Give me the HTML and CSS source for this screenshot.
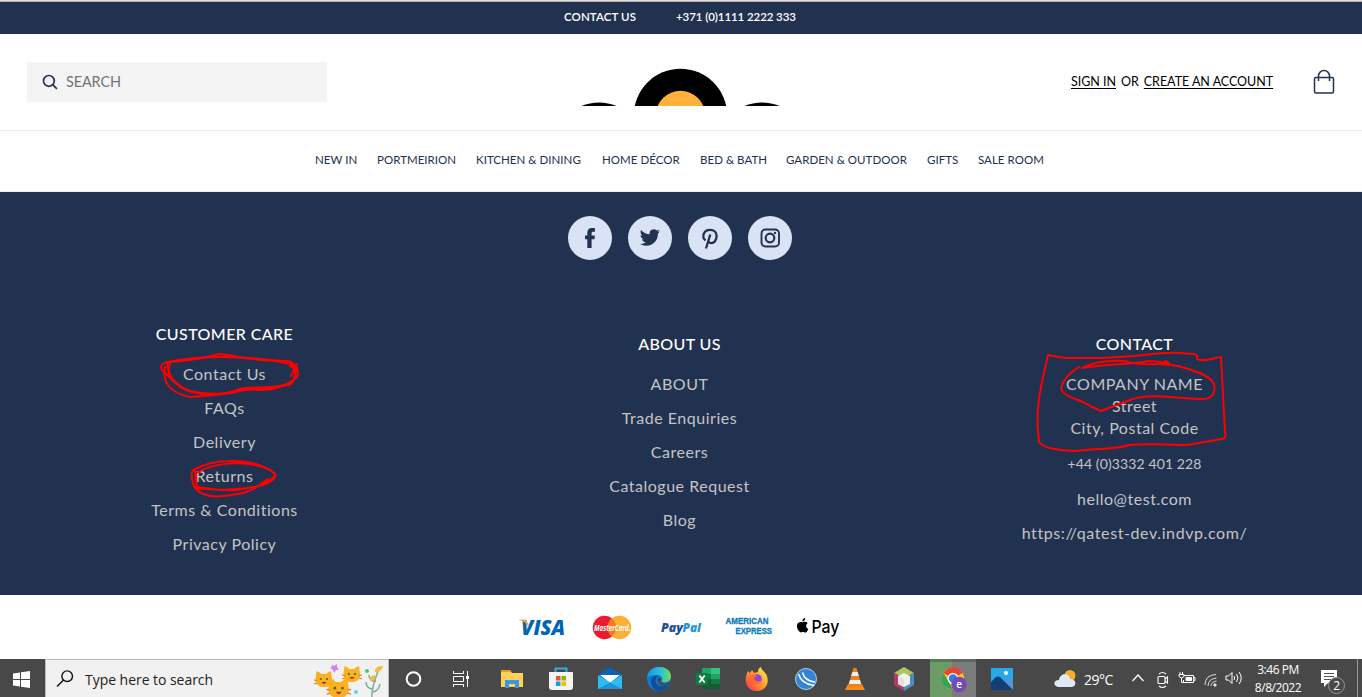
FILE: index.html
```html
<!DOCTYPE html>
<html lang="en">
<head>
<meta charset="utf-8">
<title>Shop</title>
<link rel="stylesheet" href="styles.css">
</head>
<body>
<div class="edge"></div>
<div class="topbar"><span class="top-contact">CONTACT US</span><span class="top-phone">+371 (0)1111 2222 333</span></div>
<header class="header">
  <div class="search">
    <svg width="16" height="16" viewBox="0 0 16 16" fill="none" stroke="#223250" stroke-width="1.7"><circle cx="6.9" cy="6.9" r="5.4"/><path d="M10.700 10.700l4.200 4.200"/></svg>
    <span>SEARCH</span>
  </div>
  <svg class="logo" width="200" height="38" viewBox="0 0 200 38"><circle cx="99.500" cy="47.500" r="46.700"/><circle cx="99.500" cy="47.500" r="24.700" fill="#ffb13b"/><circle cx="18" cy="81" r="46.500"/><circle cx="181" cy="81" r="46.500"/></svg>
  <div class="account"><a class="signin">SIGN IN</a><span>OR</span><a class="create">CREATE AN ACCOUNT</a></div>
  <svg class="bag" width="22" height="26" viewBox="0 0 22 26" fill="none" stroke="#223250" stroke-width="1.500"><rect x="1.500" y="8.500" width="19" height="15.500" rx="1.500"/><path d="M5.500 12V7a5.500 5.500 0 0 1 11 0v5"/></svg>
</header>
<nav class="nav"><a class="n1">NEW IN</a><a class="n2">PORTMEIRION</a><a class="n3">KITCHEN &amp; DINING</a><a class="n4">HOME DÉCOR</a><a class="n5">BED &amp; BATH</a><a class="n6">GARDEN &amp; OUTDOOR</a><a class="n7">GIFTS</a><a class="n8">SALE ROOM</a></nav>
<footer class="footer">
  <div class="social">
    <a><svg width="44" height="44" viewBox="0 0 44 44"><path d="M19.300 32V23.300H17v-3.800h2.300v-2.500c0-3.400 1.700-4.900 4.500-4.900h3.100v3.600h-1.700c-1.300 0-1.600.6-1.600 1.800v2h3.300l-.4 3.800h-2.900V32z"/></svg></a>
    <a><svg width="44" height="44" viewBox="0 0 24 24"><g transform="translate(6.400 6.200) scale(.46)"><path d="M23.950 4.570a10 10 0 0 1-2.820.77 4.960 4.960 0 0 0 2.160-2.720c-.95.550-2 .95-3.120 1.180a4.920 4.920 0 0 0-8.380 4.480C7.690 8.090 4.070 6.130 1.640 3.160a4.820 4.820 0 0 0-.67 2.480c0 1.710.87 3.210 2.190 4.100a4.900 4.900 0 0 1-2.230-.62v.06a4.920 4.920 0 0 0 3.950 4.830 5 5 0 0 1-2.210.08 4.940 4.940 0 0 0 4.600 3.420A9.870 9.870 0 0 1 0 19.540a13.990 13.990 0 0 0 7.550 2.210c9.050 0 14-7.500 14-13.980 0-.21 0-.42-.02-.63a9.940 9.940 0 0 0 2.460-2.550z"/></g></svg></a>
    <a><svg width="44" height="44" viewBox="0 0 44 44" fill="none" stroke="#223250" stroke-width="2.300"><path d="M17.500 24.500c-4.500-4-1.500-10.600 4.600-10.600 4 0 6.500 2.700 6.500 6.200 0 4.200-2.500 7-5.200 7-1.500 0-2.700-.8-3.100-2M22.300 18.500l-4.300 14"/></svg></a>
    <a><svg width="44" height="44" viewBox="0 0 44 44" fill="none" stroke="#223250" stroke-width="1.900"><rect x="13.500" y="13.500" width="17.500" height="17" rx="4"/><circle cx="22" cy="22" r="4.300" stroke-width="2.200"/><circle cx="27" cy="17" r="1.200" fill="#223250" stroke="none"/></svg></a>
  </div>
  <div class="columns">
    <section><h2>CUSTOMER CARE</h2><a>Contact Us</a><a>FAQs</a><a>Delivery</a><a>Returns</a><a>Terms &amp; Conditions</a><a>Privacy Policy</a></section>
    <section class="lower"><h2>ABOUT US</h2><a>ABOUT</a><a>Trade Enquiries</a><a>Careers</a><a>Catalogue Request</a><a>Blog</a></section>
    <section class="lower"><h2>CONTACT</h2><address>COMPANY NAME<br>Street<br>City, Postal Code</address><a class="phone">+44 (0)3332 401 228</a><a>hello@test.com</a><a class="site">https://qatest-dev.indvp.com/</a></section>
  </div>
</footer>
<div class="payments">
  <svg width="69" height="40"><text x="13" y="27.500" textLength="44" lengthAdjust="spacingAndGlyphs" font-size="20.500" font-weight="800" font-style="italic" fill="#0066b2">VISA</text><path d="M11 12.500h6l3 3.500 1 5c-2-4.500-5-7-10-8z" fill="#f9a533"/></svg>
  <svg width="69" height="40"><circle cx="27.500" cy="20.500" r="11.700" fill="#ec1c2e"/><circle cx="42.500" cy="20.500" r="11.700" fill="#fbb034"/><path d="M35 11.500a11.700 11.700 0 0 1 0 18 11.700 11.700 0 0 1 0-18z" fill="#f37a25"/><text x="17" y="24" textLength="36.500" lengthAdjust="spacingAndGlyphs" font-size="8.500" font-weight="700" font-style="italic" fill="#fff">MasterCard.</text></svg>
  <svg width="69" height="40" font-size="12.500" font-weight="800" font-style="italic"><text x="15" y="25" textLength="22" lengthAdjust="spacingAndGlyphs" fill="#1d4f9f">Pay</text><text x="36.500" y="25" textLength="18.500" lengthAdjust="spacingAndGlyphs" fill="#2795dc">Pal</text></svg>
  <svg width="69" height="40" font-family="Liberation Sans" font-size="8.600" font-weight="700" fill="#0d7ab8" stroke="#0d7ab8" stroke-width=".3"><text x="10.500" y="17" textLength="43" lengthAdjust="spacingAndGlyphs">AMERICAN</text><text x="20.500" y="26.700" textLength="36.500" lengthAdjust="spacingAndGlyphs">EXPRESS</text></svg>
  <svg width="69" height="40"><path d="M18.800 15.300c1.700-.9 3.700-.6 4.800.9-2.300 1.500-1.900 4.700.7 5.700-1.200 3.100-2.500 4.100-4 3.400-1-.4-1.600-.4-2.600 0-3 1-6.600-6.300-3.700-9.200 1.400-1.500 3-1.400 4.800-.8zM18.400 14.600c-.1-1.900 1.200-3.300 2.800-3.500.2 1.800-1.200 3.500-2.800 3.500z"/><text x="27.500" y="25.800" textLength="28" lengthAdjust="spacingAndGlyphs" font-family="Inter" font-size="17.500" font-weight="500">Pay</text></svg>
</div>
<div class="taskbar">
  <div class="start"><svg width="17" height="17" viewBox="0 0 17 17" fill="#fff"><path d="M0 2.500L7 1.500V8H0zM8 1.300L17 0v8H8zM0 9h7v6.500l-7-1zM8 9h9v8l-9-1.300z"/></svg></div>
  <div class="tasksearch">
    <svg width="18" height="18" viewBox="0 0 18 18" fill="none" stroke="#111" stroke-width="1.400"><circle cx="11.200" cy="6.200" r="5.300"/><path d="M7.500 10L1 16.500"/></svg>
    <span>Type here to search</span>
    <svg class="cats" width="70" height="37" viewBox="0 0 70 37">
      <path d="M58 37c-1-9 3-18 6-27M62 20c-4 1-7-2-7-6M58 28c-5-1-6-4-6-7M59 31c5-1 6-4 7-8" fill="none" stroke="#7cae96" stroke-width="1.500"/>
      <path d="M61 11c0-5 3-6 8-6-1 4-3 6-8 6zM56 20c0-4 1-5 5-6 1 4-1 6-5 6z" fill="#f5bd3c"/>
      <path d="M17 4l3 1 3-2v3l2 3-3 0-2 3-1-3-3-2 2-1z" fill="#d580f4"/>
      <circle cx="53" cy="10" r="2" fill="#44d05f"/><circle cx="42" cy="31" r="2" fill="#5cd6ee"/>
      <g id="cat"><path d="M2.500 10q3 1 5 3h4.500q2-2 5-3l1 8c1 11-17 11-16.500 0z" fill="#fbb01f"/><path d="M0 19l3 .5M0 23l3-1M20 19l-3 .5M20 23l-3-1" stroke="#df761d"/><circle cx="6.800" cy="18" r="1.100" fill="#476c17"/><circle cx="13" cy="18" r="1.100" fill="#476c17"/><path d="M7.500 21h5q-2.500 4-5 0z" fill="#a32c3c"/></g>
      <use href="#cat" x="28" y="-5"/><g transform="translate(12.500 5) scale(1.230)"><use href="#cat"/></g>
    </svg>
  </div>
  <div class="app"><svg width="18" height="18"><circle cx="8.500" cy="9" r="6.800" fill="none" stroke="#fff" stroke-width="2"/></svg></div>
  <div class="app shift"><svg width="18" height="18" viewBox="0 0 18 18" fill="none" stroke="#fff"><path d="M1.500 1v2.500h10V1M1.500 17v-2.500h10V17M1.500 6.500h10v5h-10zM15.500 1v16"/><path d="M14 6h3v3h-3z" fill="#fff" stroke="none"/></svg></div>
  <div class="app"><svg width="22" height="20" viewBox="0 0 22 20"><path d="M0 1h9l2 3h11v14H0z" fill="#ffd15c"/><path d="M0 1h9l1 2H0z" fill="#e5a017"/><path d="M4 11h14v8h-4v-4H8v4H4z" fill="#3a96dd"/></svg></div>
  <div class="app"><svg width="24" height="24" viewBox="0 0 24 24"><path d="M6.500 6V1.500h11V6" fill="none" stroke="#22b1ee" stroke-width="2"/><path d="M0 5h24v15q0 3-3 3H3q-3 0-3-3z" fill="#f4f4f4"/><path d="M7 9h4.500v4.500H7z" fill="#f25022"/><path d="M12.500 9H17v4.500h-4.500z" fill="#7fba00"/><path d="M7 14.500h4.500V19H7z" fill="#00a4ef"/><path d="M12.500 14.500H17V19h-4.500z" fill="#ffb900"/></svg></div>
  <div class="app"><svg width="24" height="23" viewBox="0 0 24 23"><path d="M0 8l12-8 12 8v14H0z" fill="#0b62b8"/><path d="M2 8h20l-10 8z" fill="#fff"/><path d="M0 8l12 7.500L24 8v14H0z" fill="#2cbcf2"/><path d="M0 22l12-6.500L24 22z" fill="#1b93df"/></svg></div>
  <div class="app"><svg width="24" height="24" viewBox="0 0 24 24"><defs><linearGradient id="eg" x2="1"><stop stop-color="#1595dc"/><stop offset=".55" stop-color="#27c1df"/><stop offset="1" stop-color="#6fe04c"/></linearGradient></defs><circle cx="12" cy="12" r="12" fill="#1379cd"/><path d="M0 11C1-4 24-3 24 9.500c0 5-6 7-9.500 5 2-3 0-6.500-4.500-6.500C5 8 1 9 0 11z" fill="url(#eg)"/><path d="M9 12c-2 6 5 9 13 6-4 8-15 8-18-1-1-6 3-9 7-8-1 1-2 2-2 3z" fill="#0b4f9f"/><path d="M10.500 12.500c0-2 4-2 4 0 0 1-1 1.500-.5 2.500 2 2 6 2 10-1l-2 4c-7 2-12-1-11.500-5.500z" fill="#484848"/></svg></div>
  <div class="app"><svg width="24" height="22" viewBox="0 0 24 22"><path d="M6 0h9v11H6z" fill="#21a366"/><path d="M15 0h9v6h-9z" fill="#33c481"/><path d="M15 6h9v5h-9z" fill="#21a366"/><path d="M6 6h9v5H6z" fill="#107c41"/><path d="M6 11h18v10H6z" fill="#185c37"/><path d="M15 11h9v5h-9z" fill="#107c41"/><path d="M0 5h12v12H0z" fill="#107c41"/><path d="M3.300 7.500l5.400 7M8.700 7.500l-5.400 7" stroke="#fff" stroke-width="1.800"/></svg></div>
  <div class="app"><svg width="24" height="24" viewBox="0 0 24 24"><defs><linearGradient id="fg" x1="1" x2="0" y2="1"><stop stop-color="#fff24a"/><stop offset=".5" stop-color="#ff9a2a"/><stop offset="1" stop-color="#f8235d"/></linearGradient></defs><path d="M3 4l2 2 2-3 2 3 4-1c0-3 1-4 3-5 0 3 5 5 6 9 5 17-18 20-21 7-1-5 0-8 2-12z" fill="url(#fg)"/><circle cx="12" cy="12" r="4.800" fill="#8845e8"/><path d="M5 8c2-2 5-1 7 1l-3 2c1 4 5 4 8 2-2 8-15 5-12-5z" fill="#ff6b31"/></svg></div>
  <div class="app"><svg width="24" height="24" viewBox="0 0 24 24"><circle cx="12" cy="12" r="10.500" fill="#3384d4" stroke="#a5cfef"/><path d="M4.500 7q3 10 15.500 11.500M8.500 5.500q2 8.500 12.500 9.500" stroke="#fff" stroke-width="1.500" fill="none"/></svg></div>
  <div class="app"><svg width="22" height="24" viewBox="0 0 22 24"><path d="M4 17h14l3 6H1z" fill="#f68b1e"/><path d="M9.500 1h3L18 20H4z" fill="#ef8119"/><path d="M8.300 5h5.300l1.300 4H7.100zM6 13h10l1.200 4H4.800z" fill="#eee"/></svg></div>
  <div class="app"><svg width="22" height="24" viewBox="0 0 22 24"><path d="M1 6l10-6 10 6-10 5z" fill="#abc75c"/><path d="M1 6l10 6v12L1 18z" fill="#b43b61"/><path d="M21 6l-10 6v12l10-6z" fill="#4b8cc9"/><path d="M5 9l6-3 6 3v8l-6 3-6-3z" fill="#f0f2ed"/><path d="M5 9l6 3v8l-6-3z" fill="#dce4e6"/></svg></div>
  <div class="app"><div class="active"><svg width="25" height="26" viewBox="0 0 25 26"><circle cx="11" cy="11.500" r="11" fill="#fbc52e"/><path d="M11 11.500L1.500 6C6-2 17-2 20.500 6z" fill="#e84435"/><path d="M1.500 6l5 8.500L11 22.500C1 22-3 13 1.500 6z" fill="#31a552"/><circle cx="11" cy="11.500" r="5.500" fill="#fff"/><circle cx="11" cy="11.500" r="4.200" fill="#2f7de1"/><circle cx="17" cy="17.500" r="7.700" fill="#754ab5"/><text x="14.200" y="20.800" font-size="10" font-weight="600" fill="#fff">e</text></svg></div></div>
  <div class="app"><svg width="22" height="22" viewBox="0 0 22 22"><path d="M0 0h22v22H0z" fill="#27a9e7"/><circle cx="15" cy="5" r="2" fill="#fff"/><path d="M11 15l6-5 5 5v7H11z" fill="#5b8fde"/><path d="M0 14l5-5q2-1 4 0l13 13H0z" fill="#123f75"/></svg></div>
  <div class="tray">
    <svg class="weather" width="22" height="17" viewBox="0 0 22 17"><circle cx="16" cy="5.500" r="5.500" fill="#f9ad2b"/><path d="M4 17c-5-1-5-7 1-7 1-8 11-7 11-1 7 0 7 8 1 8z" fill="#dfe9f6"/></svg>
    <span class="temp">29°C</span>
    <svg class="chev" width="14" height="10" viewBox="0 0 14 10" fill="none" stroke="#fff" stroke-width="1.300"><path d="M1.500 8L7 2l5.500 6"/></svg>
    <svg class="cam" width="14" height="18" viewBox="0 0 14 18" fill="none" stroke="#fff" stroke-width="1.100"><rect x="2" y="5.500" width="7" height="7" rx="1"/><path d="M9 8l2.500-2v6l-2.500-2M3 3q3.500-3 7 0M3 15q3.500 3 7 0"/></svg>
    <svg class="bat" width="18" height="14" viewBox="0 0 18 14" fill="none" stroke="#fff"><path d="M6 4.500h9.500v7h-10V9M15.500 6.500h1.500v3h-1.500M2 1v2M4.500 1v2M1 3.500h5v2q-2.500 3-5 0zM3.500 7v4.500h2"/><path d="M8 6.500h5.500v3H8z" fill="#fff"/></svg>
    <svg class="wifi" width="14" height="14" viewBox="0 0 14 14" fill="none" stroke="#ddd"><path d="M1 12Q1 2 12 1.500M4 13q0-7 8.500-8M7 13q0-4 5.500-5"/><circle cx="11" cy="12" r="1.200" fill="#fff"/></svg>
    <svg class="vol" width="18" height="14" viewBox="0 0 18 14" fill="none" stroke="#fff"><path d="M1 5h2.500L7 1.500v11L3.500 9H1zM9 5q1.500 2 0 4M11.500 3q3 4 0 8M14 1q4.500 6 0 12"/></svg>
    <div class="clock"><span>3:46 PM</span><span>8/8/2022</span></div>
    <svg class="note" width="25" height="25" viewBox="0 0 25 25"><path d="M0 1h16v13H7l-4 4v-4H0z" fill="#fff"/><path d="M3 4.500h10M3 7.500h10M3 10.500h7" stroke="#555"/><circle cx="15.500" cy="16.500" r="8" fill="#484848" stroke="#999"/><text x="12.200" y="21" font-size="12" fill="#fff">2</text></svg>
    <i class="desk"></i>
  </div>
</div>
<svg class="marks" width="1362" height="697" viewBox="0 0 1362 697" fill="none" stroke="#fe0000" stroke-width="2" stroke-linejoin="round" stroke-linecap="round">
  <path d="M290 366C294 368 298 370 298 374L291 384C270 391 256 385 240 389C222 397 204 395 192 392C174 385 168 376 167 362C182 361 207 358 219 354C232 355 241 358 255 359C270 362 284 359 291 362C300 367 298 374 297 377C287 386 274 390 259 390C240 387 226 394 215 395L190 397C169 393 162 381 165 367"/>
  <path d="M162 370C158 362 169 362 179 360C203 356 238 356 270 360L291 364C298 368 295 379 291 384C267 389 245 388 232 393C210 395 185 393 178 385C171 379 165 373 162 370M170 363Q166 374 173 381M290 365L297 369M297 364L291 376"/>
  <path d="M197 488C196 480 197 474 194 470C203 464 218 461 229 461C250 460 268 467 274 473C279 477 270 483 259 486L237 490C221 491 209 488 197 489L195 474C212 463 235 462 249 464C265 466 278 473 275 476C260 491 240 488 220 490L196 487M198 468C190 469 191 476 193 483C195 493 208 498 224 496C238 494 249 493 258 486L268 479"/>
  <path d="M1065 358L1048 355L1042 382C1037 403 1036 420 1039 442C1044 449 1059 450 1075 451C1096 448 1115 450 1129 445C1148 443 1168 445 1187 445L1222 439Q1227 438 1225 432L1221 357C1210 359 1202 362 1197 359C1199 351 1189 355 1181 353C1160 352 1147 355 1135 356L1101 358L1065 358"/>
  <path d="M1079 367C1067 374 1059 386 1062 391C1068 399 1081 399 1090 406L1101 411L1130 400C1150 393 1170 398 1200 399C1211 400 1216 394 1214 384C1210 376 1198 372 1185 368C1162 360 1144 368 1124 361C1102 360 1088 365 1082 368C1101 364 1128 365 1149 361C1160 361 1166 364 1169 363L1165 361"/>
</svg>
</body>
</html>
```
FILE: styles.css
```css
* { box-sizing: border-box; }
body { margin: 0; width: 1362px; height: 697px; overflow: hidden; background: #fff; font-family: Lato, "Open Sans", sans-serif; }
svg { display: block; flex: none; }
span, a { white-space: nowrap; }
.edge { height: 2px; background: #e6dcda; border-bottom: 1px solid #b9afb1; }
.topbar { height: 32px; display: flex; padding: 0 0 3px 564px; gap: 40px; align-items: center; background: #213250; color: #fff; font-size: 11.5px; font-weight: 600; }
.top-contact { width: 72px; letter-spacing: 0.1px; }
.top-phone { letter-spacing: -0.08px; }
.header { height: 97px; display: flex; align-items: center; padding-left: 27px; border-bottom: 1px solid #e8eef6; }
.search { width: 300px; height: 40px; display: flex; align-items: center; gap: 8px; padding-left: 15px; background: #f4f4f4; color: #757575; font-size: 14.5px; letter-spacing: -0.15px; }
.search span { padding-bottom: 2px; }
.logo { margin: 10px 0 0 254px; }
.account { margin-left: 290px; width: 202px; display: flex; gap: 5px; font-size: 12.5px; letter-spacing: -0.03px; color: #000; padding-bottom: 1px; }
.account a { text-decoration: underline; text-underline-offset: 2px; }
.bag { margin-left: 40px; }
.nav { height: 61px; display: flex; align-items: center; gap: 20px; padding: 0 0 3px 315px; border-bottom: 1px solid #e8eef6; font-size: 11.5px; letter-spacing: 0.03px; color: #213250; }
.n1 { width: 42px; }
.n2 { width: 79px; }
.n3 { width: 106px; }
.n4 { width: 78px; }
.n5 { width: 66px; }
.n6 { width: 121px; }
.n7 { width: 31px; }
.n8 { width: 67px; }
.footer { height: 403px; background: #213250; padding-top: 24px; }
.social { display: flex; gap: 16px; padding-left: 568px; }
.social a { width: 44px; height: 44px; border-radius: 50%; background: #dae3f5; }
.social path { fill: #223250; }
.social a:nth-child(3) path { fill: none; }
.columns { display: grid; grid-template-columns: repeat(3, 455px); margin: 57px 0 0 -3px; color: #c4c4c4; font-size: 16px; letter-spacing: 0.52px; font-variant-ligatures: none; text-align: center; }
.columns section { display: flex; flex-direction: column; }
.columns .lower { padding-top: 10px; }
.columns h2 { margin: 0 0 6px; height: 34px; font-size: 16px; font-weight: 500; line-height: 34px; letter-spacing: 0.4px; color: #fff; }
.columns a { height: 34px; line-height: 34px; }
.columns address { font-style: normal; line-height: 22px; padding: 6px 0 8px; }
.columns .phone { font-size: 14px; height: 35px; letter-spacing: 0.12px; }
.columns .site { letter-spacing: 0.6px; }
.payments { height: 64px; display: flex; align-items: flex-start; padding: 12px 0 0 508px; font-family: "Open Sans", sans-serif; }
.taskbar { height: 38px; display: flex; background: #484848; font-family: "Open Sans", "Noto Sans", sans-serif; color: #fff; }
.start { width: 45px; padding: 12px 0 0 13px; }
.tasksearch { width: 344px; display: flex; align-items: center; background: #f1f1f1; border: 1px solid #bbb; border-bottom: 0; color: #222; font-size: 14px; padding: 1px 0 0 10px; }
.tasksearch span { margin-left: 11px; width: 128px; letter-spacing: -0.04px; }
.cats { margin-left: 101px; }
.app { width: 49px; display: flex; align-items: center; justify-content: center; padding-top: 1px; }
.shift { padding-right: 4px; }
.active { width: 46px; height: 38px; margin-top: -1px; display: flex; align-items: center; justify-content: center; background: linear-gradient(90deg, #6c9c66 48%, #7c7c7c 48%); border-top: 3px solid rgba(50, 60, 50, .35); }
.active svg { margin-left: 4px; }
.tray { flex: 1; display: flex; align-items: center; padding-left: 28px; }
.temp { width: 40px; margin-left: 8px; font-size: 14px; padding-top: 3px; letter-spacing: -0.5px; }
.chev { margin-left: 7px; }
.cam { margin: 3px 0 0 11px; }
.bat { margin-left: 8px; }
.wifi { margin: 3px 0 0 8px; }
.vol { margin-left: 7px; }
.clock { width: 58px; margin-left: 6px; display: flex; flex-direction: column; align-items: center; font-size: 12px; line-height: 18px; letter-spacing: -0.45px; padding-top: 2px; }
.note { margin: 6px 0 0 14px; }
.desk { width: 1px; height: 38px; margin-left: 11px; background: #999; }
.marks { position: absolute; left: 0; top: 0; pointer-events: none; }
```
